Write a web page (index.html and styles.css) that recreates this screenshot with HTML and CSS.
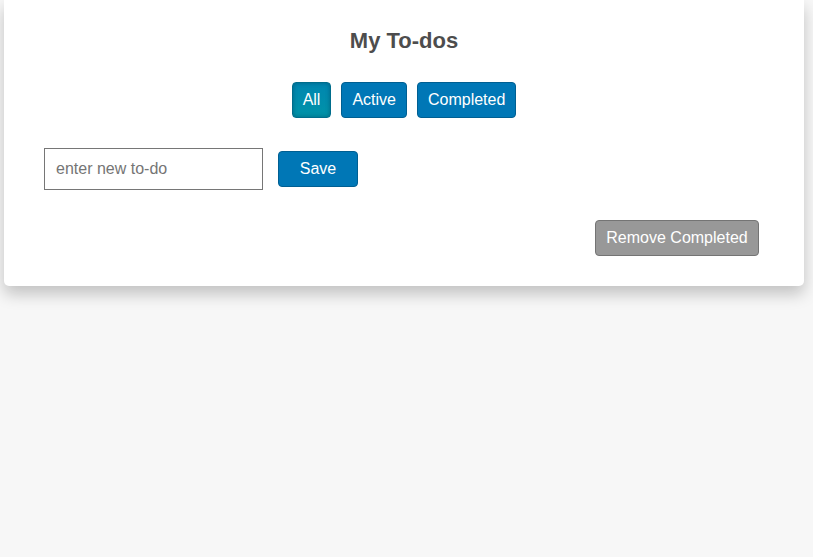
FILE: index.html
```html
<!DOCTYPE html>
<html>
<head>
<meta charset="utf-8">
<link rel="stylesheet" href="styles.css">
</head>
<body>
<div class="page">
  <div class="card">
    <h1 class="title">My To-dos</h1>
    <div class="filters">
      <button class="btn btn-selected">All</button>
      <button class="btn">Active</button>
      <button class="btn">Completed</button>
    </div>
    <form class="new-todo">
      <input class="todo-input" type="text" placeholder="enter new to-do">
      <button type="button" class="btn btn-save">Save</button>
    </form>
    <div class="footer">
      <button class="btn btn-remove">Remove Completed</button>
    </div>
  </div>
</div>
</body>
</html>
```
FILE: styles.css
```css
html, body {
  margin: 0;
  padding: 0;
  background: #f7f7f7;
  font-family: "Liberation Sans", Arial, sans-serif;
}
.page {
  min-height: 557px;
  padding: 0 0 0 4px;
  box-sizing: border-box;
}
.card {
  width: 800px;
  background: #fff;
  border-radius: 0 0 5px 5px;
  box-shadow: 0 8px 16px rgba(0, 0, 0, 0.22);
  padding: 26px 0 0;
  box-sizing: border-box;
  height: 286px;
}
.title {
  margin: 0;
  text-align: center;
  font-size: 22px;
  font-weight: bold;
  color: #4d4d4d;
  line-height: 30px;
}
.filters {
  display: flex;
  justify-content: center;
  gap: 10px;
  margin-top: 26px;
}
.btn {
  font-family: "Liberation Sans", Arial, sans-serif;
  font-size: 16px;
  color: #fff;
  background: #0077b6;
  border: 1px solid #005f92;
  border-radius: 4px;
  height: 36px;
  padding: 0 10px;
  cursor: pointer;
}
.btn-selected {
  background: linear-gradient(#0086b0, #0093a8);
  box-shadow: inset 0 0 4px rgba(0, 60, 90, 0.5);
  border-color: #006d8c;
}
.new-todo {
  display: flex;
  align-items: center;
  margin: 30px 0 0 40px;
  gap: 15px;
}
.todo-input {
  width: 219px;
  height: 42px;
  box-sizing: border-box;
  border: 1px solid #767676;
  border-radius: 0;
  padding: 0 11px;
  font-family: "Liberation Sans", Arial, sans-serif;
  font-size: 16px;
}
.todo-input::placeholder {
  color: #757575;
}
.btn-save {
  width: 80px;
}
.footer {
  display: flex;
  justify-content: flex-end;
  margin-top: 30px;
  padding-right: 45px;
}
.btn-remove {
  background: #989898;
  border-color: #747474;
  width: 164px;
  padding: 0;
}
```
